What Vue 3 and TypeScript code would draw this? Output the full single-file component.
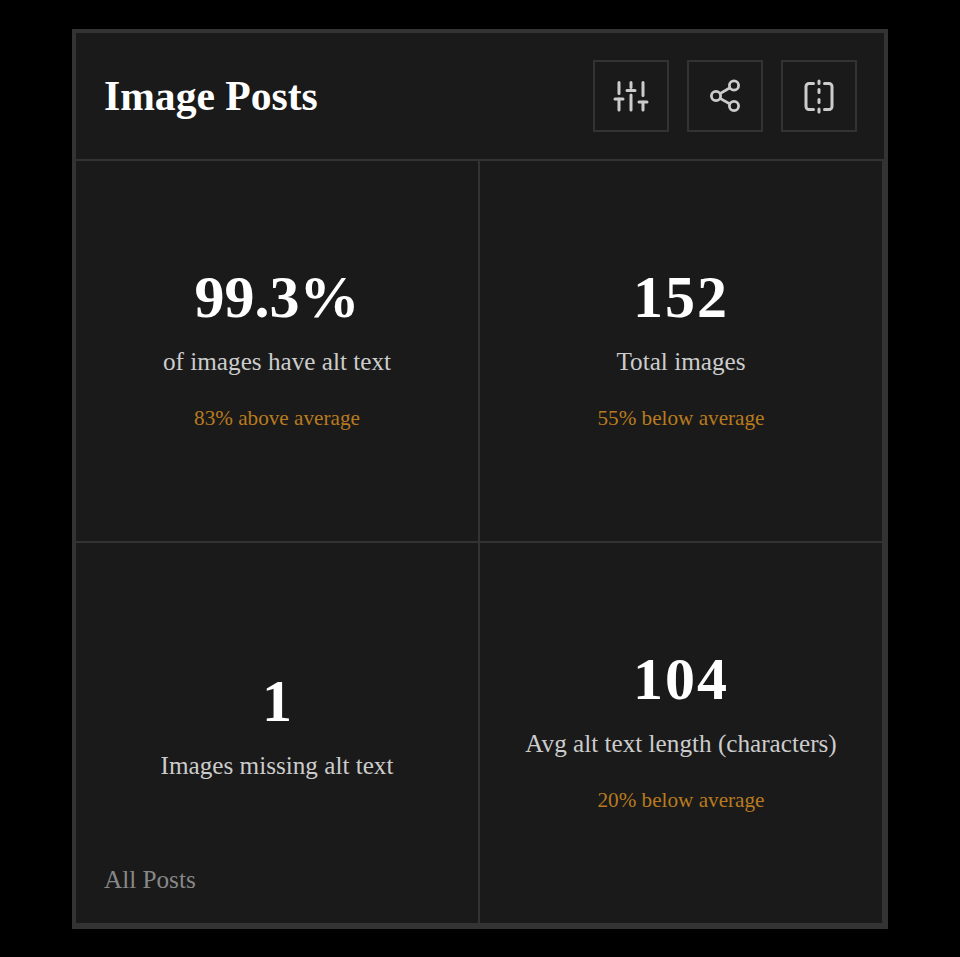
<script setup lang="ts">
interface Stat {
  value: string
  label: string
  note?: string
  link?: string
  wide?: boolean
}

const stats: Stat[] = [
  { value: '99.3%', label: 'of images have alt text', note: '83% above average' },
  { value: '152', label: 'Total images', note: '55% below average', wide: true },
  { value: '1', label: 'Images missing alt text', link: 'All Posts' },
  { value: '104', label: 'Avg alt text length (characters)', note: '20% below average', wide: true }
]
</script>

<template>
  <div class="page">
    <section class="card">
      <header class="head">
        <h1 class="title">Image Posts</h1>
        <div class="actions">
          <button class="btn" type="button" aria-label="Filter">
            <svg width="40" height="40" viewBox="0 0 40 40" fill="none" stroke="currentColor" stroke-width="3" stroke-linecap="round">
              <path d="M8 6.500v11M8 23v11M20 6.500v5M20 19v15M32 6.500v13M32 26v8" />
              <path d="M4 23h8M16 14.500h8M28 26h8" />
            </svg>
          </button>
          <button class="btn" type="button" aria-label="Share">
            <svg width="40" height="40" viewBox="0 0 40 40" fill="none" stroke="currentColor" stroke-width="2.800">
              <circle cx="11" cy="20" r="4.600" />
              <circle cx="29" cy="9.500" r="4.600" />
              <circle cx="29" cy="30" r="4.600" />
              <path d="M15 17.600l10-5.800M15 22.400l10 5.600" />
            </svg>
          </button>
          <button class="btn" type="button" aria-label="Compare">
            <svg width="40" height="40" viewBox="0 0 40 40" fill="none" stroke="currentColor" stroke-width="3" stroke-linecap="round">
              <path d="M14.500 7.500H10a3 3 0 0 0-3 3v20a3 3 0 0 0 3 3h4.500M25.500 7.500H30a3 3 0 0 1 3 3v20a3 3 0 0 1-3 3h-4.500" />
              <path d="M20 5v2.500M20 13.500v3M20 23.500v3M20 33v3" />
            </svg>
          </button>
        </div>
      </header>
      <div class="grid">
        <div v-for="stat in stats" :key="stat.label" class="cell">
          <div class="value" :class="{ wide: stat.wide }">{{ stat.value }}</div>
          <div class="label">{{ stat.label }}</div>
          <div v-if="stat.note" class="note">{{ stat.note }}</div>
          <a v-if="stat.link" class="link">{{ stat.link }}</a>
        </div>
      </div>
    </section>
  </div>
</template>

<style>
html, body {
  background: #000;
}
</style>

<style scoped>
.page {
  padding: 29px 72px 28px;
  font-family: "Liberation Serif", serif;
}
.card {
  border: 4px solid #333;
  background: #1a1a1a;
}
.head {
  box-sizing: border-box;
  display: flex;
  align-items: center;
  justify-content: space-between;
  height: 128px;
  padding: 0 27px 0 28px;
  border-bottom: 2px solid #333;
}
.title {
  margin: 0;
  font-size: 41.6px;
  font-weight: 700;
  color: #fff;
}
.actions {
  display: flex;
  gap: 18px;
}
.btn {
  display: flex;
  align-items: center;
  justify-content: center;
  width: 76px;
  height: 72px;
  padding: 0;
  border: 2px solid #333;
  background: transparent;
  color: #ccc;
}
.grid {
  display: grid;
  grid-template-columns: 1fr 1fr;
  grid-auto-rows: 382px;
}
.cell {
  position: relative;
  box-sizing: border-box;
  display: flex;
  flex-direction: column;
  align-items: center;
  justify-content: center;
  border-right: 2px solid #333;
  border-bottom: 2px solid #333;
}
.value {
  font-size: 60px;
  line-height: 52px;
  font-weight: 700;
  color: #fff;
}
.value.wide {
  letter-spacing: 2px;
}
.label {
  margin-top: 14px;
  font-size: 25.2px;
  line-height: 50px;
  color: #ccc;
}
.note {
  margin-top: 18px;
  font-size: 21.2px;
  line-height: 26px;
  color: #b97a1f;
}
.link {
  position: absolute;
  left: 28px;
  bottom: 25px;
  font-size: 25.2px;
  line-height: 36px;
  color: #888;
}
</style>
